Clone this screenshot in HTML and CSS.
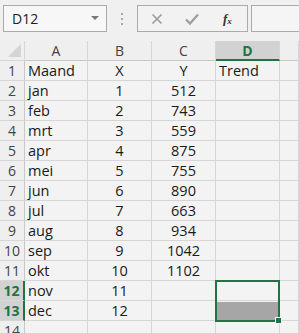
FILE: index.html
```html
<!DOCTYPE html>
<html>
<head>
<meta charset="utf-8">
<link rel="stylesheet" href="styles.css">
</head>
<body>
<div class="toolbar">
  <div class="namebox"><span class="nb-text">D12</span><span class="nb-arrow"></span></div>
  <div class="dots"><i></i><i></i><i></i></div>
  <div class="fbuttons">
    <svg class="ic-x" width="12" height="12" viewBox="0 0 12 12"><path d="M1.5 1.5 L10.5 10.5 M10.5 1.5 L1.5 10.5" stroke="#9a9a9a" stroke-width="1.6" fill="none"/></svg>
    <svg class="ic-check" width="14" height="12" viewBox="0 0 14 12"><path d="M1 6.5 L5 10.5 L13 1.5" stroke="#a0a0a0" stroke-width="2.4" fill="none"/></svg>
    <span class="fx">f<sub>x</sub></span>
  </div>
  <div class="finput"></div>
</div>
<div class="sheet">
  <div class="corner"><span class="tri"></span></div>
  <div class="ch">A</div><div class="ch">B</div><div class="ch">C</div><div class="ch sel">D</div><div class="ch"></div>

  <div class="rh">1</div><div class="c">Maand</div><div class="c ctr">X</div><div class="c ctr">Y</div><div class="c">Trend</div><div class="c"></div>
  <div class="rh">2</div><div class="c">jan</div><div class="c ctr">1</div><div class="c ctr">512</div><div class="c"></div><div class="c"></div>
  <div class="rh">3</div><div class="c">feb</div><div class="c ctr">2</div><div class="c ctr">743</div><div class="c"></div><div class="c"></div>
  <div class="rh">4</div><div class="c">mrt</div><div class="c ctr">3</div><div class="c ctr">559</div><div class="c"></div><div class="c"></div>
  <div class="rh">5</div><div class="c">apr</div><div class="c ctr">4</div><div class="c ctr">875</div><div class="c"></div><div class="c"></div>
  <div class="rh">6</div><div class="c">mei</div><div class="c ctr">5</div><div class="c ctr">755</div><div class="c"></div><div class="c"></div>
  <div class="rh">7</div><div class="c">jun</div><div class="c ctr">6</div><div class="c ctr">890</div><div class="c"></div><div class="c"></div>
  <div class="rh">8</div><div class="c">jul</div><div class="c ctr">7</div><div class="c ctr">663</div><div class="c"></div><div class="c"></div>
  <div class="rh">9</div><div class="c">aug</div><div class="c ctr">8</div><div class="c ctr">934</div><div class="c"></div><div class="c"></div>
  <div class="rh">10</div><div class="c">sep</div><div class="c ctr">9</div><div class="c ctr">1042</div><div class="c"></div><div class="c"></div>
  <div class="rh">11</div><div class="c">okt</div><div class="c ctr">10</div><div class="c ctr">1102</div><div class="c"></div><div class="c"></div>
  <div class="rh sel">12</div><div class="c">nov</div><div class="c ctr">11</div><div class="c ctr"></div><div class="c anchor"><div class="selection"><div class="sel-top"></div><div class="sel-bottom"></div><span class="handle"></span></div></div><div class="c"></div>
  <div class="rh sel">13</div><div class="c">dec</div><div class="c ctr">12</div><div class="c ctr"></div><div class="c"></div><div class="c"></div>
  <div class="rh">14</div><div class="c"></div><div class="c"></div><div class="c"></div><div class="c"></div><div class="c"></div>
</div>
</body>
</html>
```

FILE: styles.css
```css
html, body {
  margin: 0;
  padding: 0;
  background: #f2f2f2;
  font-family: "Open Sans", "Noto Sans", sans-serif;
  color: #1a1a1a;
  overflow: hidden;
}
.toolbar {
  height: 41px;
  display: flex;
  align-items: flex-start;
  padding-top: 5px;
  box-sizing: border-box;
  background: #f0f0f0;
}
.namebox {
  margin-left: 3px;
  width: 104px;
  height: 27px;
  box-sizing: border-box;
  border: 1px solid #ababab;
  background: #f7f7f7;
  display: flex;
  align-items: center;
  justify-content: space-between;
  padding: 0 7px 0 8px;
  font-size: 14px;
  color: #222;
}
.nb-arrow {
  width: 0;
  height: 0;
  border-left: 4px solid transparent;
  border-right: 4px solid transparent;
  border-top: 4px solid #777;
  margin-top: -2px;
}
.dots {
  width: 30px;
  height: 27px;
  display: flex;
  flex-direction: column;
  align-items: center;
  justify-content: center;
  gap: 3px;
}
.dots i {
  display: block;
  width: 2px;
  height: 2px;
  background: #a8a8a8;
}
.fbuttons {
  width: 111px;
  height: 27px;
  box-sizing: border-box;
  border: 1px solid #ababab;
  background: #f2f2f2;
  display: flex;
  align-items: center;
  padding-left: 13px;
}
.ic-x { margin-right: 22px; }
.ic-check { margin-right: 24px; }
.fx {
  font-family: "Liberation Serif", serif;
  font-style: italic;
  font-weight: bold;
  font-size: 13px;
  color: #333;
}
.fx sub {
  font-size: 9px;
  vertical-align: baseline;
  position: relative;
  top: 1px;
}
.finput {
  margin-left: 3px;
  flex: 1;
  height: 27px;
  box-sizing: border-box;
  border: 1px solid #ababab;
  border-right: none;
  background: #f5f5f5;
}
.sheet {
  display: grid;
  grid-template-columns: 25px 63px 64px 64px 64px 1fr;
  grid-template-rows: repeat(15, 20px);
  background: #f3f3f3;
  font-size: 14.5px;
}
.sheet > div {
  box-sizing: border-box;
  border-right: 1px solid #d6d6d6;
  border-bottom: 1px solid #d6d6d6;
  display: flex;
  align-items: center;
  white-space: nowrap;
  overflow: hidden;
}
.corner {
  position: relative;
  background: #efefef;
}
.tri {
  position: absolute;
  right: 3px;
  bottom: 3px;
  width: 0;
  height: 0;
  border-left: 13px solid transparent;
  border-bottom: 13px solid #d4d4d4;
}
.sheet > .ch {
  justify-content: center;
  background: #efefef;
  color: #444;
  font-size: 14px;
  border-bottom-color: #c8c8c8;
}
.sheet > .ch.sel {
  background: #d2d2d2;
  color: #217346;
  font-weight: bold;
  border-bottom: 2px solid #217346;
}
.sheet > .rh {
  justify-content: center;
  background: #efefef;
  color: #444;
  font-size: 14px;
  border-right-color: #c8c8c8;
}
.sheet > .rh.sel {
  background: #d2d2d2;
  color: #217346;
  font-weight: bold;
  border-right: 2px solid #217346;
}
.c { padding-left: 3px; }
.sheet > .ctr { justify-content: center; padding-left: 0; }
.sheet > .anchor {
  position: relative;
  overflow: visible;
  z-index: 2;
}
.selection {
  position: absolute;
  left: -1px;
  top: -1px;
  width: 65px;
  height: 42px;
  box-sizing: border-box;
  border: 2px solid #217346;
  display: flex;
  flex-direction: column;
}
.sel-top { flex: 1; }
.sel-bottom { flex: 1; background: #a6a6a6; margin-top: 1px; }
.handle {
  position: absolute;
  right: -4px;
  bottom: -4px;
  width: 5px;
  height: 5px;
  background: #217346;
  border: 1px solid #f3f3f3;
}
```
